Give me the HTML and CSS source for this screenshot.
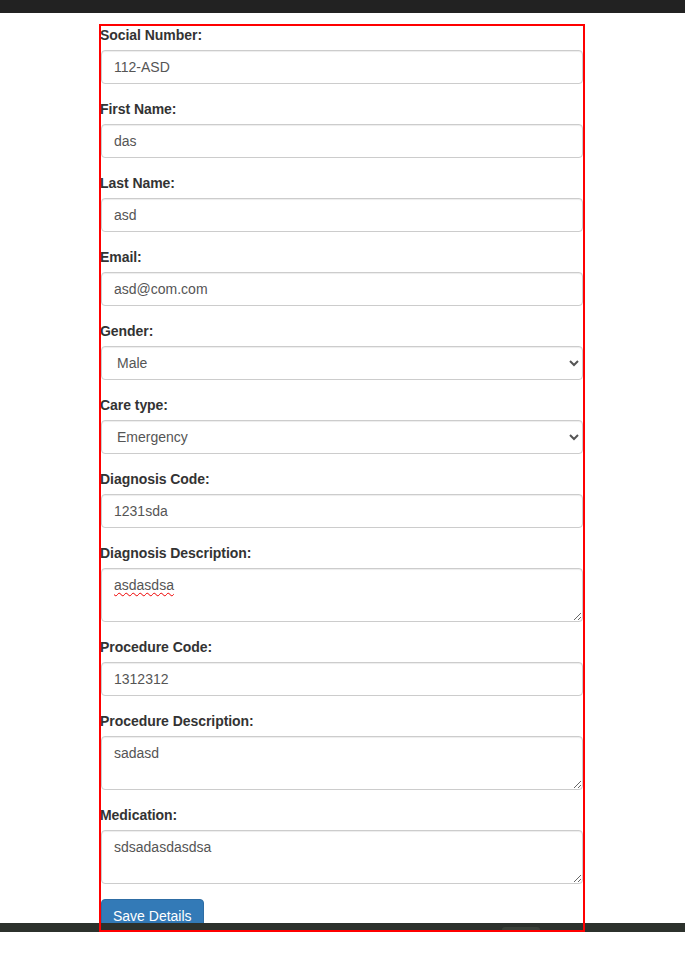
FILE: index.html
```html
<!DOCTYPE html>
<html lang="en">
<head>
<meta charset="utf-8">
<title>Patient Details</title>
<link rel="stylesheet" href="styles.css">
</head>
<body>
<div class="topbar"></div>
<div class="viewport">
  <form class="panel">
    <div class="form-group">
      <label for="ssn">Social Number:</label>
      <input id="ssn" class="form-control" type="text" value="112-ASD">
    </div>
    <div class="form-group">
      <label for="first">First Name:</label>
      <input id="first" class="form-control" type="text" value="das">
    </div>
    <div class="form-group">
      <label for="last">Last Name:</label>
      <input id="last" class="form-control" type="text" value="asd">
    </div>
    <div class="form-group">
      <label for="email">Email:</label>
      <input id="email" class="form-control" type="text" value="asd@com.com">
    </div>
    <div class="form-group">
      <label for="gender">Gender:</label>
      <select id="gender" class="form-control select">
        <option selected>Male</option>
        <option>Female</option>
      </select>
    </div>
    <div class="form-group">
      <label for="care">Care type:</label>
      <select id="care" class="form-control select">
        <option selected>Emergency</option>
        <option>Routine</option>
      </select>
    </div>
    <div class="form-group">
      <label for="dcode">Diagnosis Code:</label>
      <input id="dcode" class="form-control" type="text" value="1231sda">
    </div>
    <div class="form-group">
      <label for="ddesc">Diagnosis Description:</label>
      <textarea id="ddesc" class="form-control misspelled" rows="2" spellcheck="false">asdasdsa</textarea>
    </div>
    <div class="form-group">
      <label for="pcode">Procedure Code:</label>
      <input id="pcode" class="form-control" type="text" value="1312312">
    </div>
    <div class="form-group">
      <label for="pdesc">Procedure Description:</label>
      <textarea id="pdesc" class="form-control" rows="2" spellcheck="false">sadasd</textarea>
    </div>
    <div class="form-group">
      <label for="med">Medication:</label>
      <textarea id="med" class="form-control" rows="2" spellcheck="false">sdsadasdasdsa</textarea>
    </div>
    <button type="button" class="btn btn-primary">Save Details</button>
  </form>
</div>
<div class="bottombar"><span class="grip"></span></div>
<div class="frame"></div>
</body>
</html>
```

FILE: styles.css
```css
* {
  box-sizing: border-box;
}

html, body {
  margin: 0;
  padding: 0;
  background: #fff;
}

body {
  position: relative;
  height: 957px;
  overflow: hidden;
  font-family: "Liberation Sans", Arial, Helvetica, sans-serif;
  font-size: 14px;
  line-height: 20px;
  color: #333;
}

.topbar {
  height: 13px;
  background: #222;
}

.viewport {
  height: 910px;
  overflow: hidden;
}

.panel {
  width: 486px;
  margin: 0 0 0 99px;
  padding: 12px 2px 0;
}

.form-group {
  margin-bottom: 15px;
}

label {
  display: inline-block;
  max-width: 100%;
  margin-bottom: 5px;
  margin-left: -1px;
  font-weight: 700;
  letter-spacing: -0.05px;
}

.form-control {
  display: block;
  width: 100%;
  height: 34px;
  padding: 6px 12px;
  font-family: inherit;
  font-size: 14px;
  line-height: 20px;
  color: #555;
  background: #fff;
  border: 1px solid #ccc;
  border-radius: 4px;
  box-shadow: inset 0 1px 1px rgba(0, 0, 0, 0.075);
  margin: 0;
}

.select {
  padding-left: 11px;
}

textarea.form-control {
  height: 54px;
  resize: vertical;
  overflow: auto;
}

.misspelled {
  text-decoration: underline wavy #e00;
  text-decoration-thickness: 1px;
  text-underline-offset: 2px;
}

.btn {
  display: inline-block;
  padding: 6px 11px;
  font-family: inherit;
  font-size: 14px;
  line-height: 20px;
  border: 1px solid transparent;
  border-radius: 4px;
  cursor: pointer;
}

.btn-primary {
  color: #fff;
  background: #337ab7;
  border-color: #2e6da4;
}

.bottombar {
  position: relative;
  height: 9px;
  background: #2c312c;
}

.grip {
  position: absolute;
  left: 502px;
  bottom: 2px;
  width: 38px;
  height: 3px;
  border-radius: 3px 3px 0 0;
  background: #3a4039;
}

.frame {
  position: absolute;
  top: 24px;
  left: 99px;
  width: 486px;
  height: 908px;
  border: 2px solid #f00;
  pointer-events: none;
  z-index: 2;
}
```
